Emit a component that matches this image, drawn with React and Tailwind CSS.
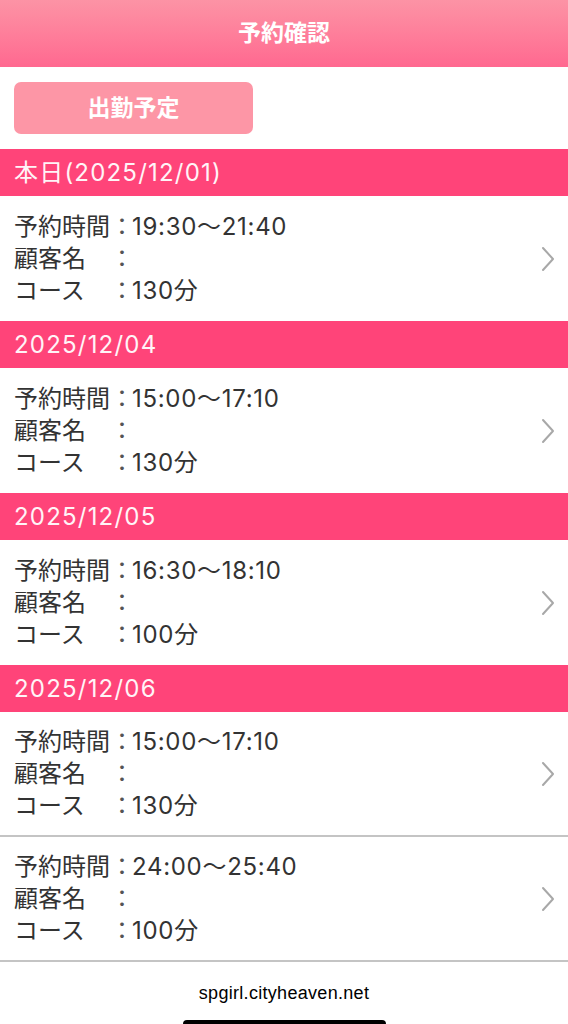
import React from 'react';

// ────────── data ──────────
const SECTIONS = [
  {
    date: '本日(2025/12/01)',
    items: [{ time: '19:30～21:40', name: '', course: '130分' }],
  },
  {
    date: '2025/12/04',
    items: [{ time: '15:00～17:10', name: '', course: '130分' }],
  },
  {
    date: '2025/12/05',
    items: [{ time: '16:30～18:10', name: '', course: '100分' }],
  },
  {
    date: '2025/12/06',
    items: [
      { time: '15:00～17:10', name: '', course: '130分' },
      { time: '24:00～25:40', name: '', course: '100分' },
    ],
  },
];

const jp = { fontFamily: 'Inter, "Noto Sans CJK JP", "Noto Sans", sans-serif' };

function Chevron() {
  return (
    <svg width="16" height="28" viewBox="0 0 16 28" fill="none" className="shrink-0">
      <path d="M3 3 L13 14 L3 25" stroke="#a8a8a8" strokeWidth="2" strokeLinecap="round" strokeLinejoin="round" />
    </svg>
  );
}

function Row({ label, value }) {
  return (
    <div className="flex items-center h-[32px]">
      <span className="w-[96px]">{label}</span>
      <span className="w-[22px] text-center text-[#555]">：</span>
      <span className="tracking-[0.7px]">{value}</span>
    </div>
  );
}

function ReservationItem({ item, last }) {
  return (
    <div className={`flex items-center justify-between pl-[14px] pr-[12px] h-[125px] bg-white ${last ? 'border-b-2 border-[#c4c4c4]' : ''}`}>
      <div className="text-[24px] leading-none text-[#333333]">
        <Row label="予約時間" value={item.time} />
        <Row label="顧客名" value={item.name} />
        <Row label="コース" value={item.course} />
      </div>
      <Chevron />
    </div>
  );
}

export default function App() {
  return (
    <div className="w-[568px] h-[1024px] bg-white flex flex-col overflow-hidden" style={jp}>
      <header className="h-[67px] flex items-center justify-center bg-gradient-to-b from-[#fc93a5] to-[#ff6890]">
        <h1 className="text-white text-[23px] font-bold">予約確認</h1>
      </header>

      <div className="px-[14px] pt-[15px] pb-[15px]">
        <button className="w-[239px] h-[52px] rounded-[7px] bg-[#fd96a6] text-white text-[23px] font-bold">
          出勤予定
        </button>
      </div>

      {SECTIONS.map((sec, i) => (
        <section key={sec.date}>
          <div className="h-[47px] flex items-center px-[14px] bg-[#ff4479] text-[#fff4f7] text-[24px] tracking-[1.2px]">
            {sec.date}
          </div>
          {sec.items.map((item, j) => (
            <ReservationItem
              key={j}
              item={item}
              last={i === SECTIONS.length - 1}
            />
          ))}
        </section>
      ))}

      <footer className="flex-1 flex flex-col items-center justify-between pt-[18px]">
        <span className="text-[18px] tracking-[0.3px] text-black" style={{ fontFamily: '"Liberation Sans", Arial, sans-serif' }}>
          spgirl.cityheaven.net
        </span>
        <div className="w-[203px] h-[4px] rounded-t-full bg-black" />
      </footer>
    </div>
  );
}
